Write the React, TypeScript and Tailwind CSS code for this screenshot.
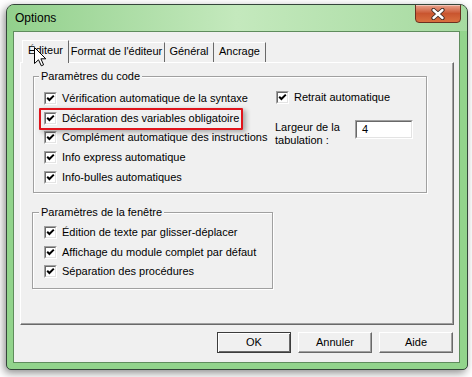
import React from "react";

const FONT = { fontFamily: '"Liberation Sans", Arial, sans-serif' };

function Check() {
  return (
    <div className="w-[13px] h-[13px] shrink-0 border border-t-[#a0a0a0] border-l-[#a0a0a0] border-r-white border-b-white">
      <div className="w-full h-full bg-white border border-t-[#696969] border-l-[#696969] border-r-[#e3e3e3] border-b-[#e3e3e3] flex items-center justify-center">
        <svg width="9" height="9" viewBox="0 0 9 9">
          <path d="M1.2 3.8 L3.4 6 L7.8 1.6" fill="none" stroke="#000" strokeWidth="2" />
        </svg>
      </div>
    </div>
  );
}

function Row({ label }: { label: string }) {
  return (
    <div className="h-[19.6px] flex items-center gap-[5px]">
      <Check />
      <span className="leading-[13px] whitespace-nowrap">{label}</span>
    </div>
  );
}

function Button({ label, def }: { label: string; def?: boolean }) {
  return (
    <div
      className={
        def
          ? "w-[74px] h-[21px] flex items-center justify-center border border-[#3c3c3c] shadow-[inset_1px_1px_0_#ffffff,inset_-1px_-1px_0_#696969] bg-[#f0f0f0]"
          : "w-[74px] h-[21px] flex items-center justify-center border border-t-white border-l-white border-r-[#696969] border-b-[#696969] shadow-[inset_-1px_-1px_0_#a0a0a0] bg-[#f0f0f0]"
      }
    >
      <span className="text-[11px] leading-[13px]">{label}</span>
    </div>
  );
}

export default function App() {
  return (
    <div className="relative w-[472px] h-[377px] bg-white overflow-hidden text-[11px] text-black" style={FONT}>
      <div className="pl-[6px] pt-[4px]">
        <div className="w-[462px] h-[366px] rounded-t-[8px] rounded-b-[5px] border border-[#34463a] bg-[#92d48c] shadow-[-2px_3px_8px_rgba(0,0,0,0.45)] flex flex-col overflow-hidden">
          {/* title bar */}
          <div className="h-[26px] flex items-start justify-between bg-gradient-to-r from-[#92d08c] via-[#c4e9bd] to-[#a6daa0]">
            <span className="pl-[8px] pt-[6px] text-[12px] leading-[15px] text-black">Options</span>
            <div className="mr-[6px] -mt-[1px] w-[46px] h-[19px] rounded-b-[4px] border border-[#6b3020] bg-gradient-to-b from-[#e9a38c] via-[#c9552f] to-[#d9703f] flex items-center justify-center shadow-[inset_0_1px_0_rgba(255,255,255,0.4)]">
              <svg width="14" height="12" viewBox="0 0 14 12">
                <path d="M2.5 2 L11.5 10 M11.5 2 L2.5 10" stroke="#3a2a24" strokeWidth="4.2" strokeLinecap="round" />
                <path d="M2.5 2 L11.5 10 M11.5 2 L2.5 10" stroke="#ffffff" strokeWidth="2.4" strokeLinecap="round" />
              </svg>
            </div>
          </div>
          {/* client */}
          <div className="ml-[6px] w-[447px] h-[332px] border border-[#5f8c5d] bg-[#f0f0f0] flex flex-col">
            {/* tabs */}
            <div className="mt-[8px] ml-[8px] h-[22px] flex items-end">
              <div className="relative z-10 w-[47px] h-[23px] -mb-[1px] bg-[#f0f0f0] border-t border-l border-white border-r border-r-[#696969] flex items-start justify-center pt-[2px]">
                <span className="leading-[14px]">Éditeur</span>
              </div>
              <div className="w-[96px] h-[20px] border-t border-white border-r border-r-[#696969] flex items-start justify-center pt-[1px]">
                <span className="leading-[14px]">Format de l'éditeur</span>
              </div>
              <div className="w-[49px] h-[20px] border-t border-white border-r border-r-[#696969] flex items-start justify-center pt-[1px]">
                <span className="leading-[14px]">Général</span>
              </div>
              <div className="w-[52px] h-[20px] border-t border-white border-r border-r-[#696969] flex items-start justify-center pt-[1px]">
                <span className="leading-[14px]">Ancrage</span>
              </div>
            </div>
            {/* panel */}
            <div className="ml-[6px] w-[434px] h-[263px] border border-t-white border-l-white border-r-[#696969] border-b-[#696969] shadow-[inset_-1px_-1px_0_#a0a0a0] flex flex-col">
              {/* group 1 */}
              <div className="relative mt-[13px] ml-[12px] w-[394px] h-[117px] border border-[#a0a0a0] shadow-[inset_1px_1px_0_#ffffff,1px_1px_0_#ffffff] flex">
                <span className="absolute -top-[7px] left-[5px] px-[2px] bg-[#f0f0f0] leading-[13px]">Paramètres du code</span>
                <div className="pl-[10px] pt-[12px] w-[241px] flex flex-col">
                  <Row label="Vérification automatique de la syntaxe" />
                  <Row label="Déclaration des variables obligatoire" />
                  <Row label="Complément automatique des instructions" />
                  <Row label="Info express automatique" />
                  <Row label="Info-bulles automatiques" />
                </div>
                <div className="pt-[11px] flex flex-col">
                  <div className="pl-[1px]">
                    <Row label="Retrait automatique" />
                  </div>
                  <div className="mt-[12px] flex items-start">
                    <span className="w-[80px] leading-[13px] pt-[1px]">
                      Largeur de la
                      <br />
                      tabulation :
                    </span>
                    <div className="w-[58px] h-[19px] border border-t-[#a0a0a0] border-l-[#a0a0a0] border-r-white border-b-white">
                      <div className="w-full h-full bg-white border border-t-[#696969] border-l-[#696969] border-r-[#e3e3e3] border-b-[#e3e3e3] flex items-center pl-[5px]">
                        <span className="leading-[13px]">4</span>
                      </div>
                    </div>
                  </div>
                </div>
                {/* red highlight */}
                <div className="absolute left-[5px] top-[31px] w-[204px] h-[22px] border-2 border-[#e0141c] rounded-[1px] shadow-[3px_2px_5px_rgba(0,0,0,0.3)]" />
              </div>
              {/* group 2 */}
              <div className="relative mt-[19px] ml-[11px] w-[241px] h-[77px] border border-[#a0a0a0] shadow-[inset_1px_1px_0_#ffffff,1px_1px_0_#ffffff] flex flex-col pl-[11px] pt-[10px]">
                <span className="absolute -top-[7px] left-[6px] px-[2px] bg-[#f0f0f0] leading-[13px]">Paramètres de la fenêtre</span>
                <Row label="Édition de texte par glisser-déplacer" />
                <Row label="Affichage du module complet par défaut" />
                <Row label="Séparation des procédures" />
              </div>
            </div>
            {/* buttons */}
            <div className="mt-[7px] pr-[6px] flex justify-end gap-[7px]">
              <Button label="OK" def />
              <Button label="Annuler" />
              <Button label="Aide" />
            </div>
          </div>
        </div>
      </div>
      {/* mouse cursor */}
      <svg className="absolute z-20 left-[34px] top-[47px]" width="13" height="20" viewBox="0 0 13 20">
        <path d="M0.5 0.5 L0.5 16.5 L4.5 12.8 L7.3 18.8 L9.6 17.8 L6.9 11.8 L11.8 11.8 Z" fill="#ffffff" stroke="#000000" strokeWidth="1" strokeLinejoin="miter" />
      </svg>
    </div>
  );
}
